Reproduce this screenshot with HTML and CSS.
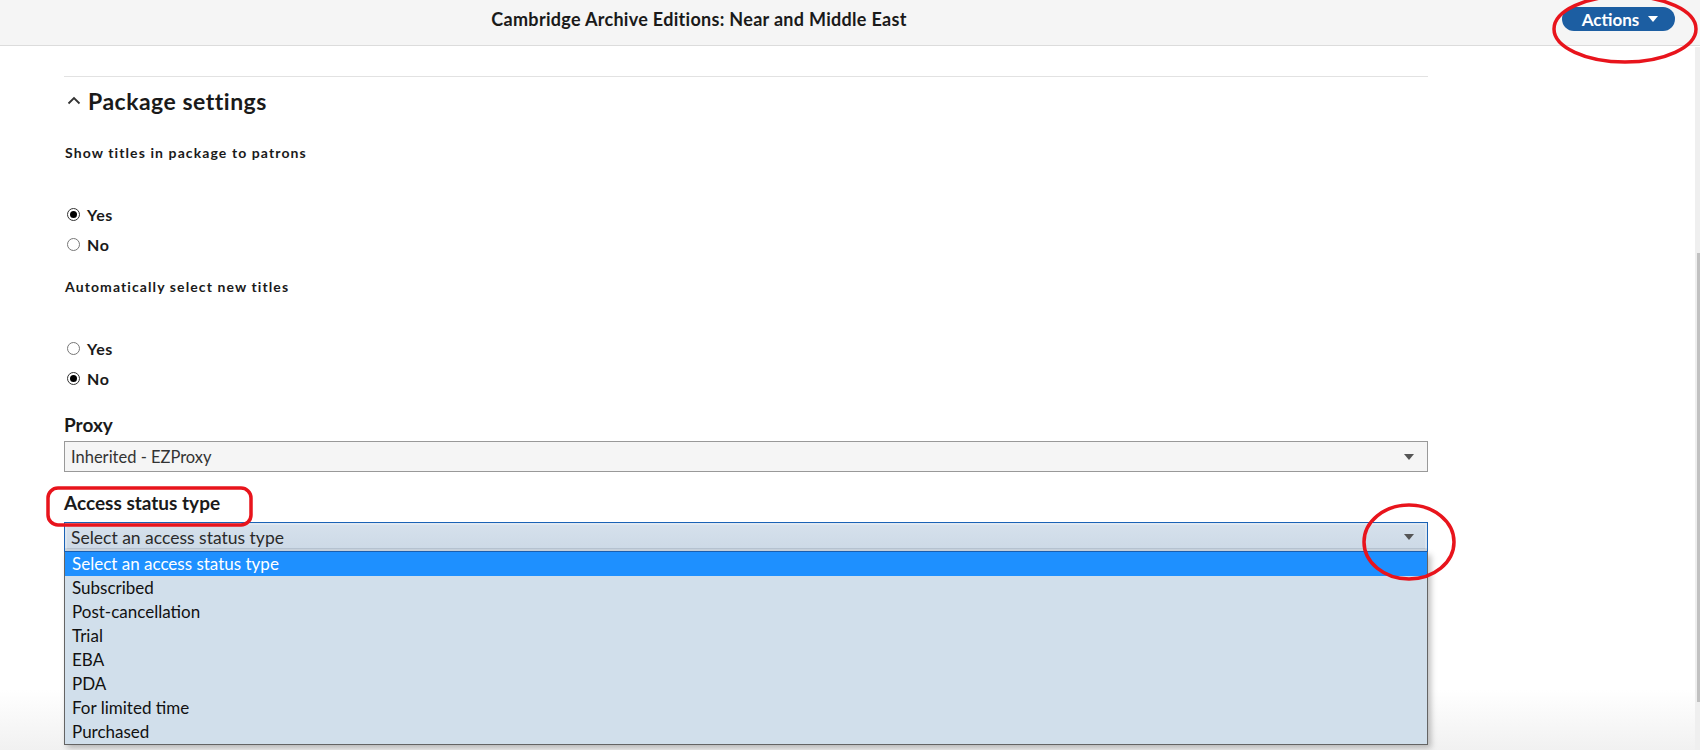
FILE: index.html
```html
<!DOCTYPE html>
<html lang="en">
<head>
  <meta charset="UTF-8" />
  <meta name="viewport" content="width=device-width, initial-scale=1.0"/>
  <title>Package settings - Cambridge Archive Editions</title>
  <link rel="stylesheet" href="styles.css">
</head>
<body>

  <header class="topbar">
    <div class="topbar-title">Cambridge Archive Editions: Near and Middle East</div>
    <button class="actions-btn">Actions <span class="caret caret-white"></span></button>
  </header>

  <div class="scroll-track"><div class="scroll-thumb"></div></div>

  <main class="content">
    <hr class="divider">

    <h2 class="accordion-head">
      <svg class="chevron" viewBox="0 0 14 10" width="14" height="10">
        <path d="M1.5 8.5 L7 3 L12.5 8.5" fill="none" stroke="#333" stroke-width="1.8"/>
      </svg>
      Package settings
    </h2>

    <div class="radio-group">
      <div class="group-label">Show titles in package to patrons</div>
      <label class="radio-row"><input type="radio" name="visible" checked> Yes</label>
      <label class="radio-row"><input type="radio" name="visible"> No</label>
    </div>

    <div class="radio-group">
      <div class="group-label">Automatically select new titles</div>
      <label class="radio-row"><input type="radio" name="autoselect"> Yes</label>
      <label class="radio-row"><input type="radio" name="autoselect" checked> No</label>
    </div>

    <div class="field">
      <div class="field-label">Proxy</div>
      <div class="select">
        <span>Inherited - EZProxy</span>
        <span class="caret"></span>
      </div>
    </div>

    <div class="field field-access">
      <div class="field-label">Access status type</div>
      <div class="select-wrap">
        <div class="select open">
          <span>Select an access status type</span>
          <span class="caret"></span>
        </div>
        <ul class="select-menu">
          <li class="active">Select an access status type</li>
          <li>Subscribed</li>
          <li>Post-cancellation</li>
          <li>Trial</li>
          <li>EBA</li>
          <li>PDA</li>
          <li>For limited time</li>
          <li>Purchased</li>
        </ul>
      </div>
    </div>
  </main>

  <!-- red markup drawn on top of the page -->
  <svg class="markup" width="1700" height="750" viewBox="0 0 1700 750">
    <ellipse cx="1625" cy="29" rx="71" ry="33" fill="none" stroke="#e8141c" stroke-width="3.5"/>
    <rect x="48" y="488" width="203" height="37" rx="10" fill="none" stroke="#e8141c" stroke-width="3.5"/>
    <ellipse cx="1409" cy="542" rx="45" ry="37" fill="none" stroke="#e8141c" stroke-width="3.5"/>
  </svg>

</body>
</html>
```

FILE: styles.css
```css
body {
  margin: 0;
  font-family: 'Lato', 'Open Sans', sans-serif;
  color: #1a1a1a;
  background: linear-gradient(to bottom, #fff 0, #fff 690px, #f1f1f1 750px);
  height: 750px;
  overflow: hidden;
  position: relative;
}

/* top bar */
.topbar {
  display: grid;
  grid-template-columns: 1398px 1fr;
  align-items: start;
  height: 46px;
  padding-top: 7px;
  box-sizing: border-box;
  background: #f5f5f5;
  border-bottom: 1px solid #dcdcdc;
}

.topbar-title {
  text-align: center;
  font-size: 18px;
  font-weight: bold;
  line-height: 24px;
  letter-spacing: 0.3px;
}

.actions-btn {
  justify-self: end;
  margin-right: 25px;
  width: 113px;
  height: 24px;
  border: none;
  border-radius: 12px;
  background: #1c5ea2;
  color: white;
  font-family: inherit;
  font-size: 17px;
  font-weight: bold;
  display: flex;
  align-items: center;
  justify-content: center;
  gap: 9px;
  padding: 0 0 0 3px;
}

.caret {
  width: 0;
  height: 0;
  border-left: 5px solid transparent;
  border-right: 5px solid transparent;
  border-top: 6px solid #555;
}

.caret-white {
  border-top-color: white;
}

/* fake browser scrollbar */
.scroll-track {
  position: absolute;
  top: 47px;
  right: 0;
  bottom: 0;
  width: 5px;
  background: #efefef;
}

.scroll-thumb {
  margin: 206px 0 0 2px;
  width: 3px;
  height: 449px;
  background: #c1c1c1;
}

/* page body */
.content {
  margin-left: 64px;
  width: 1364px;
  padding-top: 30px;
}

.divider {
  margin: 0;
  border: none;
  border-top: 1px solid #e2e2e2;
}

.accordion-head {
  margin: 10px 0 0;
  font-size: 23px;
  line-height: 28px;
  display: flex;
  align-items: center;
  gap: 7px;
  padding-left: 3px;
  letter-spacing: 0.5px;
}

.chevron {
  margin-top: -2px;
}

.radio-group {
  margin-top: 29px;
}

.radio-group + .radio-group {
  margin-top: 19px;
}

.group-label {
  font-size: 14px;
  font-weight: bold;
  line-height: 18px;
  letter-spacing: 1.1px;
  padding-left: 1px;
  margin-bottom: 37px;
}

.radio-row {
  display: flex;
  align-items: center;
  gap: 7px;
  height: 30px;
  font-size: 16px;
  font-weight: bold;
  letter-spacing: 0.6px;
  padding-left: 3px;
}

.radio-row input {
  appearance: none;
  margin: 0;
  width: 13px;
  height: 13px;
  border: 1px solid #777;
  border-radius: 50%;
  display: grid;
  place-items: center;
  background: white;
}

.radio-row input:checked {
  border-color: #333;
}

.radio-row input:checked::before {
  content: "";
  width: 7px;
  height: 7px;
  border-radius: 50%;
  background: #000;
}

.field {
  margin-top: 22px;
}

.field-access {
  margin-top: 21px;
}

.field-label {
  font-size: 19px;
  font-weight: bold;
  line-height: 20px;
  margin-bottom: 6px;
}

.field-access .field-label {
  margin-bottom: 9px;
}

.select {
  display: flex;
  justify-content: space-between;
  align-items: center;
  height: 31px;
  box-sizing: border-box;
  padding: 0 13px 0 6px;
  background: #f5f5f5;
  border: 1px solid #999;
  font-size: 16.5px;
  color: #333;
}

.select-wrap {
  position: relative;
}

.select.open {
  height: 30px;
  border-color: #1a62b5;
  background: linear-gradient(to bottom, #d6e1ec, #ccd9e6);
  box-shadow: inset 0 0 0 2px rgba(255,255,255,0.25), inset 0 -3px 0 #b6c3d1;
  color: #2a2a2a;
  font-size: 17.5px;
}

/* opened option list */
.select-menu {
  position: absolute;
  top: 100%;
  left: 0;
  right: 0;
  margin: 0;
  padding: 0;
  list-style: none;
  background: #d1dfeb;
  border: 1px solid #646464;
  border-top: none;
  box-shadow: 3px 3px 6px rgba(0,0,0,0.25);
  font-size: 17px;
}

.select-menu li {
  height: 24px;
  line-height: 24px;
  padding-left: 7px;
  color: #111;
}

.select-menu li.active {
  background: #1e90ff;
  color: white;
}

.markup {
  position: absolute;
  top: 0;
  left: 0;
  pointer-events: none;
}
```
